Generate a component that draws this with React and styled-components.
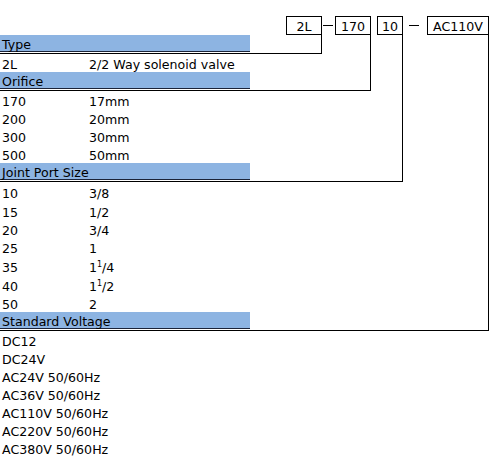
import React from 'react';
import styled, { createGlobalStyle } from 'styled-components';

const GlobalStyle = createGlobalStyle`
  body {
    margin: 0;
    background: #fff;
    font-family: "DejaVu Sans", Verdana, sans-serif;
    font-size: 12.6px;
    color: #000;
  }
`;

const Page = styled.div`
  width: 500px;
  height: 462px;
  overflow: hidden;
`;

const CodeRow = styled.div`
  display: flex;
  align-items: center;
  height: 19px;
  padding: 16px 0 0 286px;
`;

const CodeBox = styled.div`
  box-sizing: border-box;
  width: ${p => p.$w}px;
  height: 19px;
  border: 1px solid #000;
  display: flex;
  align-items: center;
  justify-content: center;
  padding-top: 1px;
  margin-left: ${p => p.$ml || 0}px;
`;

const Dash = styled.span`
  width: 10px;
  height: 1px;
  background: #000;
  margin: 0 ${p => p.$mr}px 0 ${p => p.$ml}px;
`;

const Frame = styled.div`
  box-sizing: border-box;
  width: ${p => p.$w}px;
  border-right: 1px solid #000;
  border-bottom: 1px solid #000;
`;

const Header = styled.div`
  width: 248px;
  height: 16px;
  line-height: 20px;
  padding-left: 2px;
  background: #8db4e2;
  border-bottom: 1px solid #1b2338;
  margin-bottom: 1px;
`;

const Row = styled.div`
  box-sizing: border-box;
  display: flex;
  align-items: center;
  height: ${p => p.$h || 18}px;
  padding: 3px 0 0 2px;
`;

const Code = styled.span`
  width: 87px;
`;

const Sup = styled.sup`
  font-size: 8px;
  vertical-align: 5px;
  line-height: 0;
`;

const orifice = [
  ['170', '17mm'],
  ['200', '20mm'],
  ['300', '30mm'],
  ['500', '50mm'],
];

const ports = [
  ['10', '3/8', 20],
  ['15', '1/2', 18],
  ['20', '3/4', 18],
  ['25', '1', 18],
  ['35', <>1<Sup>1</Sup>/4</>, 19],
  ['40', <>1<Sup>1</Sup>/2</>, 19],
  ['50', '2', 18],
];

const voltages = [
  'DC12',
  'DC24V',
  'AC24V 50/60Hz',
  'AC36V 50/60Hz',
  'AC110V 50/60Hz',
  'AC220V 50/60Hz',
  'AC380V 50/60Hz',
];

const App = () => (
  <Page>
    <GlobalStyle />
    <CodeRow>
      <CodeBox $w={36}>2L</CodeBox>
      <Dash $ml={1} $mr={2} />
      <CodeBox $w={36}>170</CodeBox>
      <CodeBox $w={26} $ml={6}>10</CodeBox>
      <Dash $ml={6} $mr={8} />
      <CodeBox $w={62}>AC110V</CodeBox>
    </CodeRow>
    <Frame $w={489}>
      <Frame $w={403}>
        <Frame $w={371}>
          <Frame $w={322}>
            <Header>Type</Header>
          </Frame>
          <Row>
            <Code>2L</Code>
            <span>2/2 Way solenoid valve</span>
          </Row>
          <Header>Orifice</Header>
        </Frame>
        {orifice.map(([c, d]) => (
          <Row key={c}>
            <Code>{c}</Code>
            <span>{d}</span>
          </Row>
        ))}
        <Header>Joint Port Size</Header>
      </Frame>
      {ports.map(([c, d, h]) => (
        <Row key={c} $h={h}>
          <Code>{c}</Code>
          <span>{d}</span>
        </Row>
      ))}
      <Header>Standard Voltage</Header>
    </Frame>
    {voltages.map(v => (
      <Row key={v}>{v}</Row>
    ))}
  </Page>
);

export default App;
